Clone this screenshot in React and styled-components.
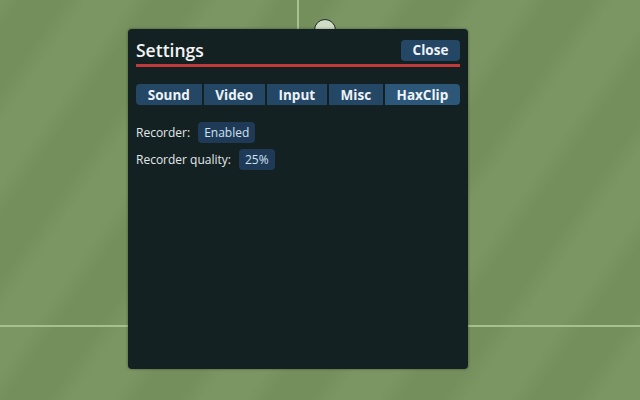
import styled, { createGlobalStyle } from "styled-components";

const GlobalStyle = createGlobalStyle`
  html, body {
    margin: 0;
    padding: 0;
  }
  body {
    font-family: "Open Sans", "DejaVu Sans", sans-serif;
    overflow: hidden;
  }
`;

const Field = styled.div`
  position: relative;
  width: 640px;
  height: 400px;
  overflow: hidden;
  background: repeating-linear-gradient(
    -55deg,
    #7b9663 0px,
    #7b9663 34px,
    #748e5c 54px,
    #748e5c 88px,
    #7b9663 108px
  );
  padding: 29px 0 0 128px;
  box-sizing: border-box;
`;

const HalfLine = styled.div`
  position: absolute;
  left: 297px;
  top: 0;
  width: 2px;
  height: 30px;
  background: #a7c08e;
`;

const GoalLine = styled.div`
  position: absolute;
  left: 0;
  right: 0;
  top: 325px;
  height: 2px;
  background: #a7c08e;
`;

const Ball = styled.div`
  position: absolute;
  left: 314px;
  top: 19px;
  width: 20px;
  height: 20px;
  border-radius: 50%;
  background: #cfdcc6;
  border: 1.5px solid #1b2a22;
`;

const Panel = styled.div`
  position: relative;
  z-index: 1;
  width: 340px;
  height: 340px;
  box-sizing: border-box;
  background: #142123;
  border-radius: 4px;
  box-shadow: 0 0 3px rgba(0, 0, 0, 0.4);
  padding: 10px 8px 0 8px;
  color: #e8eef0;
`;

const Header = styled.div`
  display: flex;
  align-items: center;
  justify-content: space-between;
  padding-bottom: 3px;
  border-bottom: 3px solid #c0393b;
`;

const Title = styled.h1`
  margin: 0;
  font-size: 17.5px;
  font-weight: 600;
  color: #f2f4f4;
  line-height: 22px;
`;

const Button = styled.button`
  font-family: inherit;
  border: none;
  border-radius: 4px;
  background: ${(p) => (p.$active ? "#2c5779" : "#244766")};
  color: #eef3f7;
  font-weight: 700;
  font-size: 13.5px;
  padding: 0;
  cursor: pointer;
`;

const CloseButton = styled(Button)`
  width: 59px;
  height: 21px;
`;

const Tabs = styled.div`
  display: flex;
  gap: 2px;
  margin-top: 17px;
`;

const Tab = styled(Button)`
  flex: 1 1 auto;
  height: 21px;
  border-radius: 0;
  &:first-child {
    border-radius: 4px 0 0 4px;
  }
  &:last-child {
    border-radius: 0 4px 4px 0;
  }
`;

const Rows = styled.div`
  display: flex;
  flex-direction: column;
  gap: 6px;
  margin-top: 17px;
`;

const Row = styled.div`
  display: flex;
  align-items: center;
  gap: 8px;
  font-size: 12px;
  color: #e2e8ea;
`;

const Toggle = styled.button`
  font-family: inherit;
  border: none;
  border-radius: 4px;
  background: #1e3a56;
  color: #cfe2f4;
  font-size: 12px;
  height: 21px;
  padding: 0 6px;
  cursor: pointer;
`;

const tabs = ["Sound", "Video", "Input", "Misc", "HaxClip"];

export default function App() {
  return (
    <>
      <GlobalStyle />
      <Field>
        <HalfLine />
        <GoalLine />
        <Ball />
        <Panel>
          <Header>
            <Title>Settings</Title>
            <CloseButton>Close</CloseButton>
          </Header>
          <Tabs>
            {tabs.map((t) => (
              <Tab key={t} $active={t === "HaxClip"}>
                {t}
              </Tab>
            ))}
          </Tabs>
          <Rows>
            <Row>
              Recorder: <Toggle>Enabled</Toggle>
            </Row>
            <Row>
              Recorder quality: <Toggle>25%</Toggle>
            </Row>
          </Rows>
        </Panel>
      </Field>
    </>
  );
}
